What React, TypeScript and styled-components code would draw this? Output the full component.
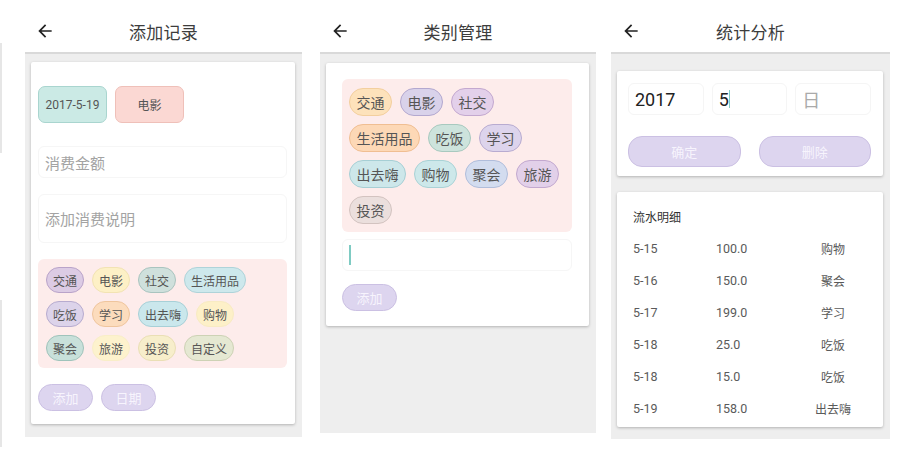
import React from "react";
import styled, { createGlobalStyle } from "styled-components";

const GlobalStyle = createGlobalStyle`
  html, body {
    margin: 0;
    padding: 0;
    background: #fff;
  }
  body {
    font-family: Roboto, "Noto Sans CJK SC", sans-serif;
    color: #333;
  }
  * {
    box-sizing: border-box;
  }
`;

const Page = styled.div`
  width: 903px;
  height: 458px;
  display: flex;
  align-items: flex-start;
  overflow: hidden;
`;

// 左边缘: 旁边截图的一点残影
const EdgeStrip = styled.div`
  width: 2px;
  padding-top: 43px;
  display: flex;
  flex-direction: column;
  gap: 147px;
`;

const EdgeBit = styled.div<{ $h: number }>`
  width: 2px;
  height: ${(p) => p.$h}px;
  background: #e6e6e6;
`;

const Panel = styled.div<{ $ml: number; $w: number }>`
  margin-left: ${(p) => p.$ml}px;
  margin-top: 10px;
  width: ${(p) => p.$w}px;
  display: flex;
  flex-direction: column;
`;

const Header = styled.div`
  height: 42px;
  position: relative;
  display: flex;
  align-items: center;
  justify-content: center;
  background: #fff;
`;

const BackButton = styled.div`
  position: absolute;
  left: 10px;
  top: 11px;
  width: 20px;
  height: 20px;
  display: flex;
  color: #222;
`;

const Title = styled.div`
  font-size: 17px;
  color: #3d3d3d;
  letter-spacing: 0.2px;
`;

const Body = styled.div<{ $h: number; $pt: number; $gap: number }>`
  height: ${(p) => p.$h}px;
  background: #eeeeee;
  border-top: 2px solid #d9d9d9;
  padding: ${(p) => p.$pt}px 7px 0 6px;
  display: flex;
  flex-direction: column;
  gap: ${(p) => p.$gap}px;
`;

const Card = styled.div<{ $h: number; $pad: string }>`
  height: ${(p) => p.$h}px;
  padding: ${(p) => p.$pad};
  background: #fff;
  border-radius: 2px;
  box-shadow: 0 1px 3px rgba(0, 0, 0, 0.25);
  display: flex;
  flex-direction: column;
`;

const Row = styled.div<{ $gap: number }>`
  display: flex;
  gap: ${(p) => p.$gap}px;
`;

const BigChip = styled.div<{ $bg: string; $bd: string }>`
  width: 69px;
  height: 37px;
  border-radius: 7px;
  background: ${(p) => p.$bg};
  border: 1px solid ${(p) => p.$bd};
  display: flex;
  align-items: center;
  justify-content: center;
  font-size: 12px;
  color: #555;
`;

const Field = styled.div<{ $h: number; $mt: number; $size: number }>`
  height: ${(p) => p.$h}px;
  margin-top: ${(p) => p.$mt}px;
  border: 1px solid #f6f6f6;
  border-radius: 6px;
  padding: 0 6px;
  display: flex;
  align-items: center;
  font-size: ${(p) => p.$size}px;
  color: #a3a3a3;
`;

const TagBox = styled.div<{ $mt: number; $pad: string; $gap: number }>`
  margin-top: ${(p) => p.$mt}px;
  background: #fdeceb;
  border-radius: 6px;
  padding: ${(p) => p.$pad};
  display: flex;
  flex-direction: column;
  gap: ${(p) => p.$gap}px;
`;

const Tag = styled.div<{ $bg: string; $bd: string; $big?: boolean }>`
  height: ${(p) => (p.$big ? 28 : 26)}px;
  padding: 0 ${(p) => (p.$big ? 6.5 : 6)}px;
  border-radius: 14px;
  background: ${(p) => p.$bg};
  border: 1px solid ${(p) => p.$bd};
  display: flex;
  align-items: center;
  font-size: ${(p) => (p.$big ? 14 : 12)}px;
  color: #555;
  white-space: nowrap;
`;

const PillButton = styled.div<{ $w: number; $h: number; $r: number }>`
  width: ${(p) => p.$w}px;
  height: ${(p) => p.$h}px;
  border-radius: ${(p) => p.$r}px;
  background: #ddd5ef;
  border: 1px solid #cbc0e3;
  color: #f7f4fd;
  font-size: 13px;
  display: flex;
  align-items: center;
  justify-content: center;
`;

const ButtonRow = styled.div<{ $mt: number; $gap: number }>`
  margin-top: ${(p) => p.$mt}px;
  display: flex;
  gap: ${(p) => p.$gap}px;
`;

const Caret = styled.span<{ $h: number }>`
  display: inline-block;
  width: 1.5px;
  height: ${(p) => p.$h}px;
  background: #7fcbc3;
`;

const DateInput = styled.div<{ $muted?: boolean }>`
  flex: 1;
  height: 32px;
  border: 1px solid #f5f5f5;
  border-radius: 6px;
  padding: 0 6px;
  display: flex;
  align-items: center;
  font-size: 18px;
  color: ${(p) => (p.$muted ? "#aaa" : "#222")};
`;

const ListTitle = styled.div`
  height: 32px;
  display: flex;
  align-items: center;
  font-size: 12px;
  color: #333;
`;

const ListRow = styled.div`
  height: 32px;
  display: grid;
  grid-template-columns: 83px 1fr 70px;
  align-items: center;
  font-size: 12.5px;
  color: #5a5a5a;
`;

const CatCell = styled.div`
  text-align: center;
  font-size: 12px;
`;

function BackArrow() {
  return (
    <BackButton>
      <svg width="20" height="20" viewBox="0 0 24 24" fill="currentColor">
        <path d="M20 11H7.83l5.59-5.59L12 4l-8 8 8 8 1.41-1.41L7.83 13H20v-2z" />
      </svg>
    </BackButton>
  );
}

type TagData = { t: string; bg: string; bd: string };

const addRows: TagData[][] = [
  [
    { t: "交通", bg: "#dccbe4", bd: "#b9a3c9" },
    { t: "电影", bg: "#fdf0c6", bd: "#f2e3b3" },
    { t: "社交", bg: "#cfe0dc", bd: "#a9c4bf" },
    { t: "生活用品", bg: "#cde8ec", bd: "#aed3d9" },
  ],
  [
    { t: "吃饭", bg: "#dcd3ea", bd: "#b7abcf" },
    { t: "学习", bg: "#fcdcbd", bd: "#efc59d" },
    { t: "出去嗨", bg: "#cae7ec", bd: "#a7d0d7" },
    { t: "购物", bg: "#fdf0c8", bd: "#f8ebc3" },
  ],
  [
    { t: "聚会", bg: "#c8e0da", bd: "#9fc3bb" },
    { t: "旅游", bg: "#fdf2cd", bd: "#f9eec8" },
    { t: "投资", bg: "#f7eecb", bd: "#eadfb5" },
    { t: "自定义", bg: "#e5e8d2", bd: "#cdd2b5" },
  ],
];

const manageRows: TagData[][] = [
  [
    { t: "交通", bg: "#fde2bb", bd: "#f3cf9e" },
    { t: "电影", bg: "#d9d2ea", bd: "#b3a8cf" },
    { t: "社交", bg: "#e3d0ea", bd: "#c3a8cf" },
  ],
  [
    { t: "生活用品", bg: "#fdd8b6", bd: "#f0be92" },
    { t: "吃饭", bg: "#cde3dc", bd: "#a8c9bf" },
    { t: "学习", bg: "#ddd4ec", bd: "#b8abd0" },
  ],
  [
    { t: "出去嗨", bg: "#cde7ea", bd: "#a6cfd5" },
    { t: "购物", bg: "#cde8ea", bd: "#a9d2d6" },
    { t: "聚会", bg: "#d3dcef", bd: "#b0bddb" },
    { t: "旅游", bg: "#e2d0e9", bd: "#c2a8cf" },
  ],
  [{ t: "投资", bg: "#ebdfdd", bd: "#d3c3c0" }],
];

const records = [
  ["5-15", "100.0", "购物"],
  ["5-16", "150.0", "聚会"],
  ["5-17", "199.0", "学习"],
  ["5-18", "25.0", "吃饭"],
  ["5-18", "15.0", "吃饭"],
  ["5-19", "158.0", "出去嗨"],
];

function AddRecord() {
  return (
    <Panel $ml={23} $w={277}>
      <Header>
        <BackArrow />
        <Title>添加记录</Title>
      </Header>
      <Body $h={385} $pt={8} $gap={15}>
        <Card $h={362} $pad="24px 8px 0 7px">
          <Row $gap={8}>
            <BigChip $bg="#cbeae5" $bd="#a9d5cf">2017-5-19</BigChip>
            <BigChip $bg="#fbd8d3" $bd="#efc0b9">电影</BigChip>
          </Row>
          <Field $h={32} $mt={23} $size={15}>消费金额</Field>
          <Field $h={49} $mt={16} $size={15}>添加消费说明</Field>
          <TagBox $mt={16} $pad="8px 8px 7px" $gap={8}>
            {addRows.map((r, i) => (
              <Row $gap={8} key={i}>
                {r.map((c) => (
                  <Tag key={c.t} $bg={c.bg} $bd={c.bd}>
                    {c.t}
                  </Tag>
                ))}
              </Row>
            ))}
          </TagBox>
          <ButtonRow $mt={16} $gap={8}>
            <PillButton $w={55} $h={27} $r={14}>添加</PillButton>
            <PillButton $w={55} $h={27} $r={14}>日期</PillButton>
          </ButtonRow>
        </Card>
      </Body>
    </Panel>
  );
}

function ManageCategory() {
  return (
    <Panel $ml={18} $w={276}>
      <Header>
        <BackArrow />
        <Title>类别管理</Title>
      </Header>
      <Body $h={381} $pt={9} $gap={15}>
        <Card $h={263} $pad="16px 17px 0 16px">
          <TagBox $mt={0} $pad="9px 7px 8px" $gap={8}>
            {manageRows.map((r, i) => (
              <Row $gap={8} key={i}>
                {r.map((c) => (
                  <Tag key={c.t} $bg={c.bg} $bd={c.bd} $big>
                    {c.t}
                  </Tag>
                ))}
              </Row>
            ))}
          </TagBox>
          <Field $h={32} $mt={7} $size={15}>
            <Caret $h={20} />
          </Field>
          <ButtonRow $mt={13} $gap={8}>
            <PillButton $w={55} $h={27} $r={14}>添加</PillButton>
          </ButtonRow>
        </Card>
      </Body>
    </Panel>
  );
}

function Statistics() {
  return (
    <Panel $ml={15} $w={279}>
      <Header>
        <BackArrow />
        <Title>统计分析</Title>
      </Header>
      <Body $h={387} $pt={17} $gap={16}>
        <Card $h={105} $pad="12px 12px 0 11px">
          <Row $gap={8}>
            <DateInput>2017</DateInput>
            <DateInput>
              5<Caret $h={18} />
            </DateInput>
            <DateInput $muted>日</DateInput>
          </Row>
          <ButtonRow $mt={21} $gap={18}>
            <PillButton $w={114} $h={31} $r={14}>确定</PillButton>
            <PillButton $w={114} $h={31} $r={14}>删除</PillButton>
          </ButtonRow>
        </Card>
        <Card $h={235} $pad="8px 15px 0 16px">
          <ListTitle>流水明细</ListTitle>
          {records.map((r, i) => (
            <ListRow key={i}>
              <div>{r[0]}</div>
              <div>{r[1]}</div>
              <CatCell>{r[2]}</CatCell>
            </ListRow>
          ))}
        </Card>
      </Body>
    </Panel>
  );
}

export default function App() {
  return (
    <>
      <GlobalStyle />
      <Page>
        <EdgeStrip>
          <EdgeBit $h={110} />
          <EdgeBit $h={147} />
        </EdgeStrip>
        <AddRecord />
        <ManageCategory />
        <Statistics />
      </Page>
    </>
  );
}
